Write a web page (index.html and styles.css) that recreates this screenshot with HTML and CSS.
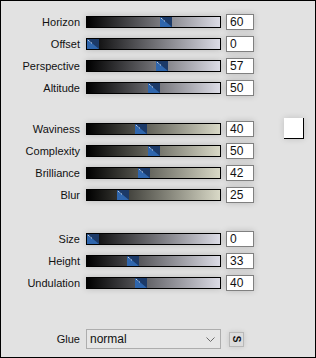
FILE: index.html
```html
<!DOCTYPE html>
<html>
<head>
    <title>Wave Settings</title>
    <link rel="stylesheet" href="styles.css">
</head>
<body>
    <div class="panel">
        <div class="group cool" id="group-1"></div>
        <div class="group warm" id="group-2"></div>
        <div class="group cool" id="group-3"></div>

        <div class="group glue-row">
            <span class="label">Glue</span>
            <div class="select">
                <span>normal</span>
                <svg width="9" height="5" viewBox="0 0 9 5"><path d="M0.5 0.5 L4.5 4.5 L8.5 0.5" fill="none" stroke="#6a6a6a" stroke-width="1"/></svg>
            </div>
            <div class="sbtn"><span>S</span></div>
        </div>
    </div>

    <script>
        const groups = {
            'group-1': [['Horizon', 60], ['Offset', 0], ['Perspective', 57], ['Altitude', 50]],
            'group-2': [['Waviness', 40], ['Complexity', 50], ['Brilliance', 42], ['Blur', 25]],
            'group-3': [['Size', 0], ['Height', 33], ['Undulation', 40]]
        };

        // track inner width 133, thumb width 12
        const thumbSvg = `
            <svg width="12" height="10" viewBox="0 0 12 10">
                <rect width="12" height="10" fill="#2f66ad"/>
                <polygon points="0,0 12,0 12,10" fill="#1c3a68"/>
                <line x1="1" y1="1" x2="5" y2="4.4" stroke="#fff" stroke-width="1" stroke-dasharray="1 1"/>
            </svg>`;

        Object.keys(groups).forEach(id => {
            const el = document.getElementById(id);
            groups[id].forEach(([name, value], i) => {
                const left = Math.round(value / 100 * 121);
                el.innerHTML += `
                    <span class="label">${name}</span>
                    <div class="track"><div class="thumb" style="left: ${left}px">${thumbSvg}</div></div>
                    <div class="val">${value}</div>
                    ${id === 'group-2' && i === 0 ? '<div class="swatch"></div>' : '<span></span>'}
                `;
            });
        });
    </script>
</body>
</html>
```

FILE: styles.css
```css
body {
    margin: 0;
    background-color: #e2e2e2;
    font-family: "Liberation Sans", Arial, sans-serif;
    color: #111;
}
.panel {
    width: 316px;
    height: 358px;
    box-sizing: border-box;
    border: 1px solid #000;
    padding-top: 10px;
}
.group {
    display: grid;
    grid-template-columns: 80px 135px 28px 1fr;
    grid-auto-rows: 22px;
    column-gap: 5px;
    align-items: center;
}
#group-2 {
    margin-top: 19px;
}
#group-3 {
    margin-top: 22px;
}
.glue-row {
    margin-top: 34px;
}
.label {
    font-size: 11px;
    text-align: right;
    padding-right: 1px;
}
.track {
    position: relative;
    height: 12px;
    box-sizing: border-box;
    border: 1px solid #000;
    box-shadow: 0 0 6px rgba(0,0,0,0.18);
}
.cool .track {
    background: linear-gradient(to right, #000, #dcdce6);
}
.warm .track {
    background: linear-gradient(to right, #000, #d9d9c7);
}
.thumb {
    position: absolute;
    top: 0;
    width: 12px;
    height: 10px;
}
.thumb svg {
    display: block;
}
.val {
    height: 16px;
    box-sizing: border-box;
    border: 1px solid #808080;
    background-color: white;
    font-size: 12px;
    line-height: 14px;
    padding-left: 3px;
    box-shadow: 0 0 6px rgba(0,0,0,0.18);
}
.swatch {
    align-self: start;
    margin-left: 25px;
    width: 20px;
    height: 21px;
    box-sizing: border-box;
    background-color: white;
    border-right: 1px solid #000;
    border-bottom: 1px solid #000;
    box-shadow: 0 0 6px rgba(0,0,0,0.15);
}
.select {
    height: 20px;
    box-sizing: border-box;
    border: 1px solid #adadad;
    background-color: #e6e6e6;
    display: flex;
    align-items: center;
    justify-content: space-between;
    padding: 0 5px 0 3px;
    font-size: 12px;
}
.select svg {
    display: block;
}
.sbtn {
    width: 15px;
    height: 15px;
    box-sizing: border-box;
    margin-left: 3px;
    border: 1px solid #b8b8b8;
    background-color: #dcdcdc;
    display: flex;
    align-items: center;
    justify-content: center;
    box-shadow: 0 0 5px rgba(0,0,0,0.12);
}
.sbtn span {
    display: block;
    transform: rotate(90deg);
    font-size: 10px;
    font-weight: bold;
    line-height: 10px;
}
```
